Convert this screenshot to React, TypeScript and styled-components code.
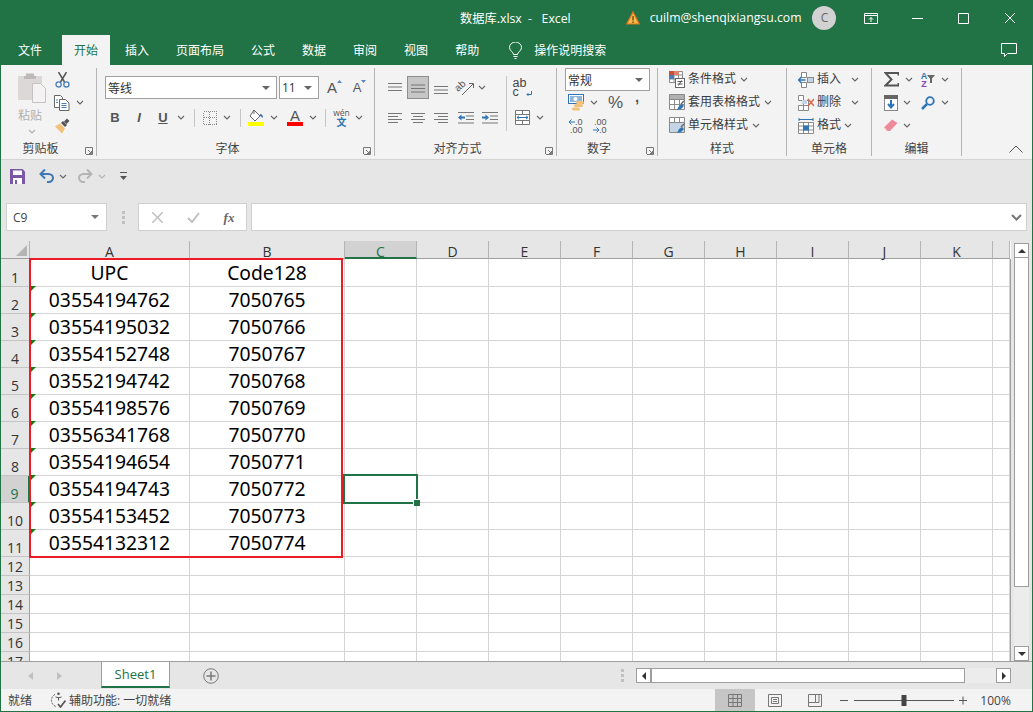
import React from "react";
import styled, { createGlobalStyle } from "styled-components";

const UI = `"Open Sans", "Noto Sans CJK SC", sans-serif`;
const GREEN = "#217346";

const Global = createGlobalStyle`
  html, body { margin: 0; padding: 0; background: #fff; }
  body { font-family: ${UI}; font-size: 12px; color: #444; }
`;

const Win = styled.div`
  width: 1033px; height: 712px; box-sizing: border-box; overflow: hidden;
  border: 1px solid ${GREEN}; border-top: 0;
  display: flex; flex-direction: column; background: #e6e6e6;
`;
const TitleBar = styled.div`
  height: 35px; flex: none; background: ${GREEN}; color: #fff;
  display: flex; align-items: center; font-size: 12.25px;
`;
const TabBar = styled.div`
  height: 30px; flex: none; background: ${GREEN}; color: #fff;
  display: flex; align-items: stretch; padding-left: 4px; gap: 1px;
`;
const MenuTab = styled.div<{ $on?: boolean; $ml?: number }>`
  padding: 0 ${(p) => (p.$on ? 12 : 13)}px; display: flex; align-items: center; font-size: 12px;
  margin-left: ${(p) => p.$ml ?? 0}px;
  background: ${(p) => (p.$on ? "#f3f3f3" : "transparent")};
  color: ${(p) => (p.$on ? GREEN : "#fff")};
`;
const Slot = styled.div<{ $w?: number; $ml?: number; $pb?: number }>`
  flex: none; display: flex; align-items: center; justify-content: center;
  width: ${(p) => (p.$w ? `${p.$w}px` : "auto")};
  margin-left: ${(p) => p.$ml ?? 0}px;
  padding-bottom: ${(p) => p.$pb ?? 0}px;
`;
const Ribbon = styled.div`
  height: 95px; flex: none; box-sizing: border-box; background: #f3f3f3;
  border-bottom: 1px solid #d4d4d4; padding-top: 3px; display: flex;
`;
const Group = styled.div<{ $w: number }>`
  width: ${(p) => p.$w}px; height: 88px; flex: none; box-sizing: border-box;
  border-right: 1px solid #b4b4b4; display: flex; flex-direction: column;
`;
const Body = styled.div<{ $pt?: number; $row?: boolean }>`
  flex: 1; padding-top: ${(p) => p.$pt ?? 0}px; min-height: 0;
  display: flex; flex-direction: ${(p) => (p.$row ? "row" : "column")};
`;
const Row = styled.div<{ $gap?: number }>`
  height: 23px; display: flex; align-items: center; flex: none; color: #444;
  margin-bottom: ${(p) => p.$gap ?? 0}px; white-space: nowrap;
`;
const RowText = styled.div`
  flex: none; margin-left: 3px; padding-bottom: 1px; line-height: 16px; color: #3c3c3c;
`;
const GroupLabel = styled.div`
  height: 16px; flex: none; display: flex; align-items: center; font-size: 12px; color: #444;
  transform: translateY(1px);
`;
const LabelText = styled.div`
  flex: 1; text-align: center; line-height: 16px;
`;
const Launcher = styled.div`
  width: 16px; flex: none; box-sizing: border-box; display: flex; align-items: center;
  padding: 3px 0 0 5px;
`;
const PasteCol = styled.div`
  width: 53px; flex: none; padding: 4px 0 0 17px; box-sizing: border-box;
  display: flex; flex-direction: column; align-items: flex-start; color: #b0b0b0;
`;
const PasteText = styled.div`
  width: 24px; text-align: center; line-height: 16px; margin-top: 5px; font-size: 12px;
`;
const PasteChev = styled.div`
  width: 28px; display: flex; justify-content: center; margin-top: 5px;
`;
const Combo = styled.div<{ $w: number; $ml?: number }>`
  width: ${(p) => p.$w}px; height: 23px; flex: none; box-sizing: border-box;
  margin-left: ${(p) => p.$ml ?? 0}px; background: #fff; border: 1px solid #a0a0a0;
  display: flex; align-items: center; justify-content: space-between; padding: 0 6px 0 2px;
  font-size: 12px; color: #333;
`;
const Sep = styled.div<{ $ml?: number; $h?: number }>`
  width: 1px; height: ${(p) => p.$h ?? 18}px; flex: none; background: #c6c6c6; margin-left: ${(p) => p.$ml ?? 0}px;
`;
const Col = styled.div<{ $w?: number }>`
  flex: none; width: ${(p) => (p.$w ? `${p.$w}px` : "auto")};
`;
const AlignSel = styled(Slot)`
  height: 23px; box-sizing: border-box; background: #c6c6c6; border: 1px solid #8e8e8e;
`;
const Collapse = styled.div`
  flex: 1; height: 88px; display: flex; align-items: flex-end; justify-content: flex-end; padding: 0 9px 3px 0; box-sizing: border-box;
`;
const Qat = styled.div`
  height: 32px; flex: none; display: flex; align-items: center; background: #e6e6e6;
`;
const FormulaBar = styled.div`
  height: 49px; flex: none; box-sizing: border-box; background: #e6e6e6;
  display: flex; padding: 11px 0 10px 5px;
`;
const NameBox = styled.div`
  width: 101px; box-sizing: border-box; background: #fff; border: 1px solid #d0d0d0;
  display: flex; align-items: center; justify-content: space-between; padding: 0 7px 0 6px; font-size: 12px;
`;
const FxBox = styled.div`
  width: 109px; box-sizing: border-box; background: #fff; border: 1px solid #d0d0d0; margin-left: 13px;
  display: flex; align-items: center;
`;
const FormulaInput = styled.div`
  width: 776px; margin-left: 4px; box-sizing: border-box; background: #fff; border: 1px solid #d0d0d0;
  display: flex; align-items: center; justify-content: flex-end; padding-right: 4px;
`;
const Sheet = styled.div`
  height: 420px; flex: none; display: flex; background: #e6e6e6;
`;
const GridArea = styled.div`
  width: 1010px; flex: none; position: relative; overflow: hidden; background: #fff;
`;
const GridRow = styled.div<{ $h: number }>`
  height: ${(p) => p.$h}px; display: flex; flex: none;
`;
const Corner = styled.div`
  width: 29px; flex: none; box-sizing: border-box; background: #e6e6e6;
  border-right: 1px solid #b4b4b4; border-bottom: 1px solid #9e9e9e;
  display: flex; align-items: flex-end; justify-content: flex-end; padding: 0 2px 2px 0;
`;
const ColHead = styled.div<{ $w: number; $on?: boolean }>`
  width: ${(p) => p.$w}px; flex: none; box-sizing: border-box; text-align: center; font-size: 14px;
  line-height: 13px; padding-top: 4px;
  background: ${(p) => (p.$on ? "#d2d2d2" : "#e6e6e6")};
  color: ${(p) => (p.$on ? GREEN : "#333")};
  border-right: 1px solid #b4b4b4;
  border-bottom: ${(p) => (p.$on ? `2px solid ${GREEN}` : "1px solid #9e9e9e")};
`;
const RowHead = styled.div<{ $on?: boolean }>`
  width: 29px; flex: none; box-sizing: border-box; font-size: 14px; line-height: 16px; text-align: center;
  display: flex; align-items: flex-end; justify-content: center;
  background: ${(p) => (p.$on ? "#d2d2d2" : "#e6e6e6")};
  color: ${(p) => (p.$on ? GREEN : "#333")};
  border-right: ${(p) => (p.$on ? `2px solid ${GREEN}` : "1px solid #9e9e9e")};
  border-bottom: 1px solid #c4c4c4;
`;
const GridCell = styled.div<{ $w: number; $flag?: boolean }>`
  width: ${(p) => p.$w}px; flex: none; box-sizing: border-box; position: relative;
  border-right: 1px solid #d4d4d4; border-bottom: 1px solid #d4d4d4; padding-bottom: 1px;
  display: flex; align-items: center; justify-content: center;
  font-family: "Noto Sans", sans-serif; font-size: 19.3px; color: #000;
  &::before {
    content: ""; display: ${(p) => (p.$flag ? "block" : "none")}; position: absolute; left: 1px; top: -1px;
    border-top: 5px solid #107c10; border-right: 5px solid transparent;
  }
`;
const RedBox = styled.div`
  position: absolute; left: 28px; top: 17px; width: 314px; height: 300px; box-sizing: border-box;
  border: 2px solid #ed1c24; pointer-events: none;
`;
const Selection = styled.div`
  position: absolute; left: 342px; top: 233px; width: 75px; height: 30px; box-sizing: border-box;
  border: 2px solid ${GREEN}; pointer-events: none;
  &::after {
    content: ""; position: absolute; right: -4px; bottom: -4px; width: 7px; height: 7px; background: ${GREEN};
    border: 1px solid #fff; border-right: 0; border-bottom: 0; box-sizing: border-box;
  }
`;
const GridEdge = styled.div`
  position: absolute; right: 0; top: 18px; bottom: 0; width: 1px; background: #9e9e9e;
`;
const VScroll = styled.div`
  width: 21px; flex: none; padding: 2px 0 0 3px; box-sizing: border-box; display: flex; flex-direction: column;
`;
const ScrollBtn = styled.div`
  width: 15px; height: 15px; flex: none; box-sizing: border-box;
  background: #fff; border: 1px solid #9e9e9e; display: flex; align-items: center; justify-content: center;
`;
const VThumb = styled.div`
  width: 15px; height: 329px; flex: none; box-sizing: border-box; background: #fff; border: 1px solid #9e9e9e; border-top: 0;
`;
const VTrack = styled.div`
  flex: 1; background: #ececec; width: 15px; min-height: 0;
`;
const SheetBar = styled.div`
  height: 28px; flex: none; box-sizing: border-box; background: #e6e6e6; border-top: 1px solid #9e9e9e;
  display: flex; align-items: center;
`;
const SheetTab = styled.div`
  width: 69px; height: 26px; flex: none; box-sizing: border-box; background: #fff;
  border: 1px solid #9e9e9e; border-top: 0; border-bottom: 2px solid ${GREEN};
  display: flex; align-items: center; justify-content: center; color: ${GREEN}; font-size: 13px;
`;
const TabSlot = styled(Slot)`
  align-self: flex-start;
`;
const HScroll = styled.div`
  display: flex; margin-left: 12px; align-items: center; width: 375px; background: #ececec;
`;
const HThumb = styled.div`
  width: 314px; height: 15px; flex: none; box-sizing: border-box; background: #fff; border: 1px solid #9e9e9e;
`;
const HTrack = styled.div`
  flex: 1;
`;
const StatusBar = styled.div`
  height: 22px; flex: none; background: #f3f3f3; display: flex; align-items: stretch; font-size: 12px; color: #444;
`;
const StatusItem = styled.div<{ $ml?: number }>`
  display: flex; align-items: center; margin-left: ${(p) => p.$ml ?? 0}px; white-space: nowrap;
`;
const ViewBtn = styled.div<{ $on?: boolean; $ml?: number }>`
  width: 40px; flex: none; display: flex; align-items: center; justify-content: center;
  background: ${(p) => (p.$on ? "#c6c6c6" : "transparent")};
  margin-left: ${(p) => p.$ml ?? 0}px;
`;
const Avatar = styled.div`
  width: 24px; height: 24px; border-radius: 50%; background: #d2d2d2; color: #666; flex: none;
  display: flex; align-items: center; justify-content: center; font-size: 12px; margin-left: 11px;
`;
const Letter = styled.span<{ $size?: number; $b?: boolean; $i?: boolean; $u?: boolean; $c?: string; $f?: string; $lh?: number }>`
  font-family: ${(p) => p.$f ?? `"Liberation Sans", sans-serif`};
  font-size: ${(p) => p.$size ?? 13}px; line-height: ${(p) => p.$lh ?? p.$size ?? 13}px; display: block;
  font-weight: ${(p) => (p.$b ? 700 : 400)}; font-style: ${(p) => (p.$i ? "italic" : "normal")};
  text-decoration: ${(p) => (p.$u ? "underline" : "none")}; color: ${(p) => p.$c ?? "#555"};
`;
const Stack = styled.div<{ $align?: string }>`
  display: flex; flex-direction: column; align-items: ${(p) => p.$align ?? "center"};
`;
const Inline = styled.div<{ $align?: string }>`
  display: flex; align-items: ${(p) => p.$align ?? "flex-start"};
`;
const ColorBar = styled.div<{ $c: string }>`
  width: 16px; height: 4px; background: ${(p) => p.$c}; flex: none;
`;

/* ---------- icons ---------- */
const Chev = ({ c = "#666" }: { c?: string }) => (
  <svg width="8" height="5" viewBox="0 0 8 5"><path d="M1 1l3 3 3-3" fill="none" stroke={c} strokeWidth="1.1" /></svg>
);
const Down = ({ c = "#666" }: { c?: string }) => (
  <svg width="8" height="4" viewBox="0 0 8 4"><path d="M0 0h8L4 4z" fill={c} /></svg>
);
const Launch = () => (
  <svg width="8" height="8" viewBox="0 0 8 8"><path d="M.5 7V.5H7.500V7.500H1M3 3l3.500 3.500M6.500 4v2.500H4" fill="none" stroke="#777" /></svg>
);
const Paste = () => (
  <svg width="28" height="31" viewBox="0 0 28 31">
    <rect x="0" y="4" width="24" height="24" rx="1" fill="#dcd8d8" />
    <path d="M8 4V1.500h8V4h2v3H6V4z" fill="#bdb9b9" />
    <path d="M14.500 11.500h8l5 5v14h-13z" fill="#f4f2f2" stroke="#c6c2c2" />
  </svg>
);
const Cut = () => (
  <svg width="15" height="16" viewBox="0 0 15 16">
    <path d="M3.500 0l6 10M11.500 0l-6 10" stroke="#555" strokeWidth="1.500" fill="none" />
    <circle cx="3.600" cy="12.400" r="2.600" fill="none" stroke="#4a7ebb" strokeWidth="1.300" />
    <circle cx="11.400" cy="12.400" r="2.600" fill="none" stroke="#4a7ebb" strokeWidth="1.300" />
  </svg>
);
const Copy = () => (
  <svg width="16" height="16" viewBox="0 0 16 16">
    <path d="M.5.500h6l2 2v10H.5z" fill="#fff" stroke="#666" />
    <path d="M5.500 4.500h6l3.500 3.500V15.500H5.500z" fill="#fff" stroke="#666" />
    <path d="M7.500 8.500h5M7.500 10.500h5M7.500 12.500h5M2 5h2M2 7.500h2" stroke="#4a7ebb" />
  </svg>
);
const Brush = () => (
  <svg width="16" height="16" viewBox="0 0 16 16">
    <path d="M1 8.500l5-3 5 5-3 5z" fill="#f2c27a" />
    <path d="M7 5l2-2 4 4-2 2z M10 3.500l3-3 2.500 2.500-3 3z" fill="#555" />
  </svg>
);
const GrowA = ({ up }: { up: boolean }) => (
  <Inline>
    <Letter $size={up ? 15 : 13} $lh={16} $c="#555">A</Letter>
    <svg width="5" height="4" viewBox="0 0 5 4"><path d={up ? "M0 3l2.500-3L5 3z" : "M0 0h5L2.500 3z"} fill="#5b87c0" /></svg>
  </Inline>
);
const BorderIc = () => (
  <svg width="14" height="14" viewBox="0 0 14 14" shapeRendering="crispEdges">
    <path d="M.5.500h13v13H.5zM6.500 .5v13M.5 6.500h13" fill="none" stroke="#8a8a8a" strokeDasharray="1 1" />
  </svg>
);
const FillIc = () => (
  <svg width="16" height="17" viewBox="0 0 16 17">
    <path d="M6 1l6 6-5 5-5-5z" fill="#fff" stroke="#666" />
    <path d="M6 1V5" stroke="#666" />
    <path d="M12 5c2 0 3 1.500 3 4-1.500-1-2-2-3-2z" fill="#3f6fae" />
    <rect x="0" y="13" width="16" height="4" fill="#ffff00" />
  </svg>
);
const FontColor = () => (
  <Stack>
    <Letter $size={15} $lh={13} $c="#555">A</Letter>
    <ColorBar $c="#ff0000" />
  </Stack>
);
const Wen = () => (
  <Stack>
    <Letter $size={8.5} $lh={8} $f={UI}>wén</Letter>
    <Letter $size={10} $lh={10} $b $c="#2f75b5" $f={`"Noto Sans CJK SC", sans-serif`}>文</Letter>
  </Stack>
);
const Lines = ({ l, blue }: { l: number[][]; blue?: "in" | "out" }) => (
  <svg width="16" height="12" viewBox="0 0 16 12">
    {l.map((a, i) => <rect key={i} x={a[0]} y={a[2]} width={a[1] - a[0]} height="1" fill="#777" />)}
    {blue === "out" && <path d="M0 5.500L3.500 2.500V4.500H7V6.500H3.500V8.500z" fill="#2f75b5" />}
    {blue === "in" && <path d="M7 5.500L3.500 2.500V4.500H0V6.500H3.500V8.500z" fill="#2f75b5" />}
  </svg>
);
const VLines = ({ y }: { y: number }) => (
  <svg width="14" height="16" viewBox="0 0 14 16">
    {[0, 3.5, 7].map((d) => <rect key={d} x="0" y={y + d} width="14" height="1" fill="#777" />)}
  </svg>
);
const Orient = () => (
  <svg width="18" height="16" viewBox="0 0 18 16" overflow="visible">
    <text x="1" y="12" transform="rotate(-42 1 12)" fontFamily="Liberation Sans" fontSize="10" fill="#555">ab</text>
    <path d="M5 15L16 4M12 3.500h4.500V8" fill="none" stroke="#666" />
  </svg>
);
const Wrap = () => (
  <Inline $align="flex-end">
    <Stack $align="flex-start">
      <Letter $size={12.5} $lh={9} $c="#444">ab</Letter>
      <Letter $size={12.5} $lh={9} $c="#444">c</Letter>
    </Stack>
    <svg width="6" height="6" viewBox="0 0 6 6"><path d="M5.500 0v3.500H1M2.500 2L1 3.500 2.500 5" fill="none" stroke="#2f75b5" /></svg>
  </Inline>
);
const Merge = () => (
  <svg width="15" height="15" viewBox="0 0 15 15">
    <path d="M.5.500h14v14H.5zM.5 4.500h14M.5 10.500h14M7.500.5v4M7.500 10.500v4" fill="#fff" stroke="#777" />
    <path d="M2 7.500h11M4 5.800L2 7.500l2 1.700M11 5.800l2 1.700-2 1.700" fill="none" stroke="#2f75b5" />
  </svg>
);
const Currency = () => (
  <svg width="17" height="17" viewBox="0 0 17 17">
    <rect x=".5" y=".5" width="15" height="9" fill="#fff" stroke="#2f75b5" />
    <rect x="2" y="2" width="12" height="6" fill="#8fb4da" />
    <circle cx="7.500" cy="5" r="2" fill="#fff" />
    <rect x="8" y="7" width="8" height="3" rx="1.500" fill="#f2c27a" />
    <rect x="6" y="10" width="9" height="3" rx="1.500" fill="#f2c27a" />
    <rect x="4" y="13.500" width="8" height="3" rx="1.500" fill="#f2c27a" />
  </svg>
);
const DecRow = styled.div`
  display: flex; align-items: center; justify-content: flex-end; width: 16px; height: 8px;
`;
const Dec = ({ inc }: { inc: boolean }) => (
  <Stack>
    <DecRow>
      {inc && <svg width="6" height="6" viewBox="0 0 6 6"><path d="M0 3h6M2.500.5L0 3l2.500 2.500" fill="none" stroke="#2f75b5" /></svg>}
      <Letter $size={9} $lh={8}>{inc ? ".0" : ".00"}</Letter>
    </DecRow>
    <DecRow>
      {!inc && <svg width="6" height="6" viewBox="0 0 6 6"><path d="M0 3h6M3.500.5L6 3 3.500 5.500" fill="none" stroke="#2f75b5" /></svg>}
      <Letter $size={9} $lh={8}>{inc ? ".00" : ".0"}</Letter>
    </DecRow>
  </Stack>
);
const CellGrid = () => <path d="M.5.500h15v15H.5zM.5 5.500h15M.5 10.500h15M5.500.5v15M10.500.5v15" fill="#fff" stroke="#8a8a8a" />;
const CondFmt = () => (
  <svg width="16" height="17" viewBox="0 0 16 17">
    <path d="M.5.500h13v11H.5zM.5 4h13M.5 8h13M5 .5v11M9.500.5v11" fill="#fff" stroke="#8a8a8a" />
    <rect x="0" y="0" width="5" height="4" fill="#c8513a" /><rect x="5" y="0" width="5" height="4" fill="#e0806e" />
    <rect x="0" y="4" width="5" height="4" fill="#4a7ebb" />
    <rect x="6.500" y="7.500" width="9" height="9" fill="#fff" stroke="#666" />
    <path d="M8.500 10.500h5M8.500 13h5M12.500 9.500l-3 5" stroke="#555" fill="none" />
  </svg>
);
const TableFmt = ({ light }: { light?: boolean }) => (
  <svg width="16" height="17" viewBox="0 0 16 17">
    <CellGrid />
    {light ? <rect x="1" y="6" width="14" height="9" fill="#c6d4e8" /> : <rect x="1" y="1" width="14" height="4" fill="#b0b0b0" />}
    <path d="M8 16l2-4 3-2 2 2-3 3z" fill="#2f75b5" />
    <path d="M12 10l3-3" stroke="#666" strokeWidth="1.500" />
  </svg>
);
const InsertIc = () => (
  <svg width="16" height="16" viewBox="0 0 16 16">
    <path d="M3.500.5h5v5h-5zM3.500 10.500h5v5h-5z" fill="#fff" stroke="#888" />
    <rect x="9.500" y="5.500" width="6" height="5" fill="#c4d2e4" stroke="#888" />
    <path d="M.5 8h7M3.500 5L.5 8l3 3" fill="none" stroke="#2f75b5" strokeWidth="1.500" />
  </svg>
);
const DeleteIc = () => (
  <svg width="16" height="16" viewBox="0 0 16 16">
    <path d="M.5.500h5v5h-5zM.5 10.500h5v5h-5zM5.500 5.500h5v5h-5zM5.500 10.500h5v5h-5z" fill="#fff" stroke="#888" />
    <rect x="4" y="5" width="5" height="4" fill="#c4d2e4" />
    <path d="M10 4l6 7M16 4l-6 7" stroke="#d8694a" strokeWidth="1.500" />
  </svg>
);
const FormatIc = () => (
  <svg width="16" height="16" viewBox="0 0 16 16">
    <path d="M.5 4.500h15v11H.5zM.5 8h15M.5 12h15M5.500 4.500v11M10.500 4.500v11" fill="#fff" stroke="#8a8a8a" />
    <rect x="5" y="7.500" width="6" height="5" fill="#2f75b5" />
    <path d="M1 1.500h14M1 0v3M15 0v3" stroke="#2f75b5" fill="none" />
  </svg>
);
const Sigma = () => (
  <svg width="15" height="15" viewBox="0 0 15 15"><path d="M14.500 3.500V1H1.500L7.500 7.500 1.500 13.500H14.500V11" fill="none" stroke="#555" strokeWidth="2" /></svg>
);
const SortIc = () => (
  <Inline $align="center">
    <Stack>
      <Letter $size={9} $lh={8} $b $c="#2f75b5">A</Letter>
      <Letter $size={9} $lh={8} $b $c="#8a3fb0">Z</Letter>
    </Stack>
    <svg width="8" height="9" viewBox="0 0 8 9"><path d="M0 0h8L5 3.500V8H3V3.500z" fill="#666" /></svg>
  </Inline>
);
const FillDown = () => (
  <svg width="14" height="16" viewBox="0 0 14 16">
    <rect x=".5" y=".5" width="13" height="15" fill="#fff" stroke="#888" />
    <rect x="0" y="0" width="14" height="4" fill="#666" />
    <path d="M7 5v7M4 9l3 3.500L10 9" fill="none" stroke="#2f75b5" strokeWidth="2" />
  </svg>
);
const FindIc = () => (
  <svg width="14" height="14" viewBox="0 0 14 14">
    <circle cx="9" cy="5" r="3.800" fill="none" stroke="#2f75b5" strokeWidth="1.800" />
    <path d="M6 8l-5 5" stroke="#2f75b5" strokeWidth="2.500" />
  </svg>
);
const Eraser = () => (
  <svg width="14" height="13" viewBox="0 0 14 13">
    <path d="M0 8.500L8 0.500 13.500 4 6 12H3z" fill="#ef8a9a" />
    <path d="M.5 8.500L3.500 12" stroke="#f7c3cc" />
  </svg>
);
const Save = () => (
  <svg width="15" height="15" viewBox="0 0 15 15">
    <path d="M0 0h12.500L15 2.500V15H0z" fill="#7b58a6" />
    <rect x="3" y="1.500" width="9" height="4.500" fill="#fff" />
    <rect x="3" y="9" width="9" height="6" fill="#fff" />
    <rect x="5" y="11" width="2" height="4" fill="#7b58a6" />
  </svg>
);
const Undo = ({ c, flip }: { c: string; flip?: boolean }) => (
  <svg width="15" height="14" viewBox="0 0 15 14" style={flip ? { transform: "scaleX(-1)" } : undefined}>
    <path d="M2 5h7.500c3 0 4.500 2 4.500 4s-2 4-4 4H8" fill="none" stroke={c} strokeWidth="2" />
    <path d="M6 0.500L1.500 5 6 9.500" fill="none" stroke={c} strokeWidth="2" />
  </svg>
);
const Custom = () => (
  <svg width="7" height="8" viewBox="0 0 7 8"><path d="M0 .5h7" stroke="#555" /><path d="M0 4h7L3.500 8z" fill="#555" /></svg>
);
const Warn = () => (
  <svg width="14" height="14" viewBox="0 0 14 14">
    <path d="M7 1l6.300 12H.7z" fill="#f5b84a" stroke="#e2711d" strokeWidth="1.200" />
    <path d="M7 5v4.500M7 10.500v1.500" stroke="#5a3a10" strokeWidth="1.200" />
  </svg>
);
const WinIc = ({ d, w = 14 }: { d: string; w?: number }) => (
  <svg width={w} height="14" viewBox={`0 0 ${w} 14`}><path d={d} fill="none" stroke="#fff" /></svg>
);
const Bulb = () => (
  <svg width="13" height="17" viewBox="0 0 13 17">
    <path d="M4.500 12.500c0-2.500-4-3.500-4-7a6 5.500 0 0 1 12 0c0 3.500-4 4.500-4 7z" fill="none" stroke="#fff" />
    <path d="M4.500 14.500h4M5.500 16.500h2" stroke="#fff" />
  </svg>
);
const Comment = () => (
  <svg width="16" height="15" viewBox="0 0 16 15"><path d="M.5.500h15v10H6.500L3.500 13.500V10.500H.5z" fill="none" stroke="#fff" /></svg>
);
const CornerTri = () => (
  <svg width="11" height="11" viewBox="0 0 11 11"><path d="M11 0v11H0z" fill="#b4b4b4" /></svg>
);
const NavTri = ({ left }: { left?: boolean }) => (
  <svg width="5" height="8" viewBox="0 0 5 8"><path d={left ? "M5 0v8L0 4z" : "M0 0v8l5-4z"} fill="#c0c0c0" /></svg>
);
const SmallTri = ({ dir }: { dir: "l" | "r" | "u" | "d" }) => {
  const d = { l: "M5 0v8L1 4z", r: "M1 0v8l4-4z", u: "M0 6h8L4 2z", d: "M0 2h8L4 6z" }[dir];
  return <svg width="8" height="8" viewBox={dir === "l" || dir === "r" ? "-1 0 8 8" : "0 0 8 8"}><path d={d} fill="#333" /></svg>;
};
const PlusCircle = () => (
  <svg width="16" height="16" viewBox="0 0 16 16">
    <circle cx="8" cy="8" r="7.300" fill="none" stroke="#7a7a7a" />
    <path d="M8 3.500v9M3.500 8h9" stroke="#7a7a7a" strokeWidth="1.500" />
  </svg>
);
const Dots = () => (
  <svg width="3" height="13" viewBox="0 0 3 13"><path d="M0 0h3v3H0zM0 5h3v3H0zM0 10h3v3H0z" fill="#c0c0c0" /></svg>
);
const Access = () => (
  <svg width="16" height="16" viewBox="0 0 16 16">
    <path d="M5 2.500A6.500 6.500 0 0 0 6 14.500" fill="none" stroke="#555" strokeDasharray="2 1.200" />
    <circle cx="8.500" cy="1.800" r="1.300" fill="#555" />
    <path d="M5.500 5l3 .7 3-.7M8.500 5.500v3" stroke="#555" fill="none" />
    <path d="M8 12l2.500 3L15.500 8.500" fill="none" stroke="#555" strokeWidth="1.700" />
  </svg>
);
const ViewNormal = () => (
  <svg width="14" height="13" viewBox="0 0 14 13"><path d="M.5.500h13v12H.5zM.5 4.500h13M.5 8.500h13M5 .5v12M9.500.5v12" fill="none" stroke="#777" /></svg>
);
const ViewPage = () => (
  <svg width="14" height="13" viewBox="0 0 14 13"><path d="M.5.500h13v12H.5zM3.500 3.500h7v6h-7zM5 5.500h4M5 7.500h4" fill="none" stroke="#777" /></svg>
);
const ViewBreak = () => (
  <svg width="14" height="13" viewBox="0 0 14 13"><path d="M.5.500h13v12H.5zM.5 8.500h7V.5M11 .5v8H7.500" fill="none" stroke="#777" /></svg>
);
const ZoomSlider = () => (
  <svg width="128" height="13" viewBox="0 0 128 13">
    <path d="M0 6.500h8M14 6.500h100M119 6.500h8M123 2.500v8" stroke="#555" fill="none" />
    <rect x="61.500" y="1" width="5" height="11" fill="#444" />
  </svg>
);

const COLS: [string, number][] = [["A", 160], ["B", 155], ["C", 72], ["D", 72], ["E", 72], ["F", 72], ["G", 72], ["H", 72], ["I", 72], ["J", 72], ["K", 72], ["", 17]];
const DATA: [string, string][] = [
  ["UPC", "Code128"], ["03554194762", "7050765"], ["03554195032", "7050766"], ["03554152748", "7050767"],
  ["03552194742", "7050768"], ["03554198576", "7050769"], ["03556341768", "7050770"], ["03554194654", "7050771"],
  ["03554194743", "7050772"], ["03554153452", "7050773"], ["03554132312", "7050774"],
];
const HEIGHTS = [28, 27, 27, 27, 27, 27, 27, 27, 27, 27, 27, 19, 19, 19, 19, 19, 19];

export default function App() {
  return (
    <Win>
      <Global />
      <TitleBar>
        <Slot $ml={459}>数据库.xlsx&nbsp;&nbsp;-&nbsp;&nbsp;&nbsp;Excel</Slot>
        <Slot $ml={55} $w={14}><Warn /></Slot>
        <Slot $ml={10}>cuilm@shenqixiangsu.com</Slot>
        <Avatar>C</Avatar>
        <Slot $ml={28}><WinIc d="M.5 2.500h13v10H.5zM.5 4.500h13M7 11V6.500M5 8.500l2-2 2 2" /></Slot>
        <Slot $ml={34}><WinIc w={11} d="M0 7.500h11" /></Slot>
        <Slot $ml={35}><WinIc w={12} d="M.5 2.500h10v10H.5z" /></Slot>
        <Slot $ml={33}><WinIc d="M2 2l10 10M12 2L2 12" /></Slot>
      </TitleBar>
      <TabBar>
        <MenuTab>文件</MenuTab>
        <MenuTab $on $ml={6}>开始</MenuTab>
        <MenuTab $ml={1}>插入</MenuTab>
        <MenuTab>页面布局</MenuTab>
        <MenuTab>公式</MenuTab>
        <MenuTab>数据</MenuTab>
        <MenuTab>审阅</MenuTab>
        <MenuTab>视图</MenuTab>
        <MenuTab>帮助</MenuTab>
        <Slot $ml={16}><Bulb /></Slot>
        <Slot $ml={11}>操作说明搜索</Slot>
        <Slot $ml={394}><Comment /></Slot>
      </TabBar>
      <Ribbon>
        <Group $w={96}>
          <Body $row>
            <PasteCol>
              <Paste />
              <PasteText>粘贴</PasteText>
              <PasteChev><Chev c="#b0b0b0" /></PasteChev>
            </PasteCol>
            <Col>
              <Row><Slot $w={16}><Cut /></Slot></Row>
              <Row><Slot $w={16}><Copy /></Slot><Slot $ml={6} $w={8}><Chev /></Slot></Row>
              <Row><Slot $w={16}><Brush /></Slot></Row>
            </Col>
          </Body>
          <GroupLabel><LabelText>剪贴板</LabelText><Launcher><Launch /></Launcher></GroupLabel>
        </Group>
        <Group $w={278}>
          <Body $pt={8}>
            <Row $gap={7}>
              <Combo $w={172} $ml={8}>等线<Down /></Combo>
              <Combo $w={40} $ml={2}>11<Down /></Combo>
              <Slot $ml={8} $w={15}><GrowA up /></Slot>
              <Slot $ml={10} $w={15}><GrowA up={false} /></Slot>
            </Row>
            <Row>
              <Slot $ml={6} $w={24}><Letter $b>B</Letter></Slot>
              <Slot $w={24}><Letter $i $b>I</Letter></Slot>
              <Slot $w={24}><Letter $u $b>U</Letter></Slot>
              <Slot $w={12}><Chev /></Slot>
              <Sep $ml={7} />
              <Slot $ml={5} $w={20}><BorderIc /></Slot>
              <Slot $w={14}><Chev /></Slot>
              <Sep $ml={6} />
              <Slot $ml={7} $w={16}><FillIc /></Slot>
              <Slot $ml={3} $w={14}><Chev /></Slot>
              <Slot $ml={6} $w={16}><FontColor /></Slot>
              <Slot $ml={3} $w={14}><Chev /></Slot>
              <Sep $ml={5} />
              <Slot $ml={7} $w={17}><Wen /></Slot>
              <Slot $ml={2} $w={14}><Chev /></Slot>
            </Row>
          </Body>
          <GroupLabel><LabelText>字体</LabelText><Launcher><Launch /></Launcher></GroupLabel>
        </Group>
        <Group $w={182}>
          <Body $pt={8} $row>
            <Col $w={131}>
              <Row $gap={7}>
                <Slot $ml={9} $w={22}><VLines y={3} /></Slot>
                <AlignSel $ml={1} $w={22}><VLines y={4.5} /></AlignSel>
                <Slot $ml={1} $w={22}><VLines y={6} /></Slot>
                <Slot $ml={5} $w={18}><Orient /></Slot>
                <Slot $w={14}><Chev /></Slot>
              </Row>
              <Row>
                <Slot $ml={9} $w={22}><Lines l={[[1, 15, 1], [1, 11, 4], [1, 15, 7], [1, 11, 10]]} /></Slot>
                <Slot $ml={1} $w={22}><Lines l={[[1, 15, 1], [3, 13, 4], [1, 15, 7], [3, 13, 10]]} /></Slot>
                <Slot $ml={1} $w={22}><Lines l={[[1, 15, 1], [5, 15, 4], [1, 15, 7], [5, 15, 10]]} /></Slot>
                <Slot $ml={5} $w={18}><Lines blue="out" l={[[0, 16, 0], [8, 16, 3.5], [8, 16, 7], [0, 16, 10.5]]} /></Slot>
                <Slot $ml={5} $w={20}><Lines blue="in" l={[[0, 16, 0], [8, 16, 3.5], [8, 16, 7], [0, 16, 10.5]]} /></Slot>
              </Row>
            </Col>
            <Sep $h={55} />
            <Col>
              <Row $gap={7}><Slot $ml={7} $w={17}><Wrap /></Slot></Row>
              <Row><Slot $ml={7} $w={17}><Merge /></Slot><Slot $ml={2} $w={14}><Chev /></Slot></Row>
            </Col>
          </Body>
          <GroupLabel><LabelText>对齐方式</LabelText><Launcher><Launch /></Launcher></GroupLabel>
        </Group>
        <Group $w={101}>
          <Body>
            <Row><Combo $w={85} $ml={8}>常规<Down /></Combo></Row>
            <Row>
              <Slot $ml={9} $w={20}><Currency /></Slot>
              <Slot $ml={1} $w={14}><Chev /></Slot>
              <Slot $ml={6} $w={17}><Letter $size={17} $c="#555">%</Letter></Slot>
              <Slot $ml={6} $w={14} $pb={12}><Letter $size={15} $b $c="#555">,</Letter></Slot>
            </Row>
            <Row>
              <Slot $ml={9} $w={17}><Dec inc /></Slot>
              <Slot $ml={7} $w={17}><Dec inc={false} /></Slot>
            </Row>
          </Body>
          <GroupLabel><LabelText>数字</LabelText><Launcher><Launch /></Launcher></GroupLabel>
        </Group>
        <Group $w={129}>
          <Body>
            <Row><Slot $ml={11} $w={16}><CondFmt /></Slot><RowText>条件格式</RowText><Slot $ml={4} $w={8}><Chev /></Slot></Row>
            <Row><Slot $ml={11} $w={16}><TableFmt /></Slot><RowText>套用表格格式</RowText><Slot $ml={4} $w={8}><Chev /></Slot></Row>
            <Row><Slot $ml={11} $w={16}><TableFmt light /></Slot><RowText>单元格样式</RowText><Slot $ml={4} $w={8}><Chev /></Slot></Row>
          </Body>
          <GroupLabel><LabelText>样式</LabelText></GroupLabel>
        </Group>
        <Group $w={85}>
          <Body>
            <Row><Slot $ml={11} $w={16}><InsertIc /></Slot><RowText>插入</RowText><Slot $ml={10} $w={8}><Chev /></Slot></Row>
            <Row><Slot $ml={11} $w={16}><DeleteIc /></Slot><RowText>删除</RowText><Slot $ml={10} $w={8}><Chev /></Slot></Row>
            <Row><Slot $ml={11} $w={16}><FormatIc /></Slot><RowText>格式</RowText><Slot $ml={3} $w={8}><Chev /></Slot></Row>
          </Body>
          <GroupLabel><LabelText>单元格</LabelText></GroupLabel>
        </Group>
        <Group $w={90}>
          <Body>
            <Row><Slot $ml={10} $w={18}><Sigma /></Slot><Slot $ml={5} $w={8}><Chev /></Slot><Slot $ml={7} $w={16}><SortIc /></Slot><Slot $ml={5} $w={8}><Chev /></Slot></Row>
            <Row><Slot $ml={10} $w={18}><FillDown /></Slot><Slot $ml={3} $w={8}><Chev /></Slot><Slot $ml={9} $w={16}><FindIc /></Slot><Slot $ml={5} $w={8}><Chev /></Slot></Row>
            <Row><Slot $ml={10} $w={18}><Eraser /></Slot><Slot $ml={3} $w={8}><Chev /></Slot></Row>
          </Body>
          <GroupLabel><LabelText>编辑</LabelText></GroupLabel>
        </Group>
        <Collapse>
          <svg width="14" height="8" viewBox="0 0 14 8"><path d="M.5 7.500L7 1l6.500 6.500" fill="none" stroke="#555" /></svg>
        </Collapse>
      </Ribbon>
      <Qat>
        <Slot $ml={7} $w={18}><Save /></Slot>
        <Slot $ml={11} $w={18}><Undo c="#3f78b5" /></Slot>
        <Slot $ml={4} $w={8}><Chev /></Slot>
        <Slot $ml={9} $w={18}><Undo c="#b4b4b4" flip /></Slot>
        <Slot $ml={4} $w={8}><Chev c="#b4b4b4" /></Slot>
        <Slot $ml={12} $w={10}><Custom /></Slot>
      </Qat>
      <FormulaBar>
        <NameBox>C9<Down c="#777" /></NameBox>
        <Slot $ml={15}><Dots /></Slot>
        <FxBox>
          <Slot $ml={11} $w={14}><svg width="11" height="11" viewBox="0 0 11 11"><path d="M0 0l11 11M11 0L0 11" stroke="#c0c0c0" strokeWidth="1.500" /></svg></Slot>
          <Slot $ml={22} $w={14}><svg width="13" height="11" viewBox="0 0 13 11"><path d="M1 6l4 4 7-9" fill="none" stroke="#c0c0c0" strokeWidth="2" /></svg></Slot>
          <Slot $ml={22} $w={14}><Letter $size={13} $i $b $c="#666" $f={`"Liberation Serif", serif`}>fx</Letter></Slot>
        </FxBox>
        <FormulaInput><svg width="11" height="7" viewBox="0 0 11 7"><path d="M1 1l4.500 4.500L10 1" fill="none" stroke="#777" strokeWidth="2" /></svg></FormulaInput>
      </FormulaBar>
      <Sheet>
        <GridArea>
          <GridRow $h={18}>
            <Corner><CornerTri /></Corner>
            {COLS.map(([c, w]) => <ColHead key={c} $w={w} $on={c === "C"}>{c}</ColHead>)}
          </GridRow>
          {HEIGHTS.map((h, r) => (
            <GridRow key={r} $h={h}>
              <RowHead $on={r === 8}>{r + 1}</RowHead>
              {COLS.map(([c, w], ci) => (
                <GridCell key={c} $w={w} $flag={ci === 0 && r >= 1 && r <= 10}>
                  {ci < 2 && DATA[r] ? DATA[r][ci] : null}
                </GridCell>
              ))}
            </GridRow>
          ))}
          <RedBox />
          <Selection />
          <GridEdge />
        </GridArea>
        <VScroll>
          <ScrollBtn><SmallTri dir="u" /></ScrollBtn>
          <VThumb />
          <VTrack />
          <ScrollBtn><SmallTri dir="d" /></ScrollBtn>
        </VScroll>
      </Sheet>
      <SheetBar>
        <Slot $ml={27} $w={5}><NavTri left /></Slot>
        <Slot $ml={24} $w={5}><NavTri /></Slot>
        <TabSlot $ml={39}><SheetTab>Sheet1</SheetTab></TabSlot>
        <Slot $ml={33}><PlusCircle /></Slot>
        <Slot $ml={402}><Dots /></Slot>
        <HScroll>
          <ScrollBtn><SmallTri dir="l" /></ScrollBtn>
          <HThumb />
          <HTrack />
          <ScrollBtn><SmallTri dir="r" /></ScrollBtn>
        </HScroll>
      </SheetBar>
      <StatusBar>
        <StatusItem $ml={7}>就绪</StatusItem>
        <StatusItem $ml={18}><Access /></StatusItem>
        <StatusItem $ml={3}>辅助功能: 一切就绪</StatusItem>
        <ViewBtn $on $ml={544}><ViewNormal /></ViewBtn>
        <ViewBtn><ViewPage /></ViewBtn>
        <ViewBtn><ViewBreak /></ViewBtn>
        <StatusItem $ml={5}><ZoomSlider /></StatusItem>
        <StatusItem $ml={12}>100%</StatusItem>
      </StatusBar>
    </Win>
  );
}
